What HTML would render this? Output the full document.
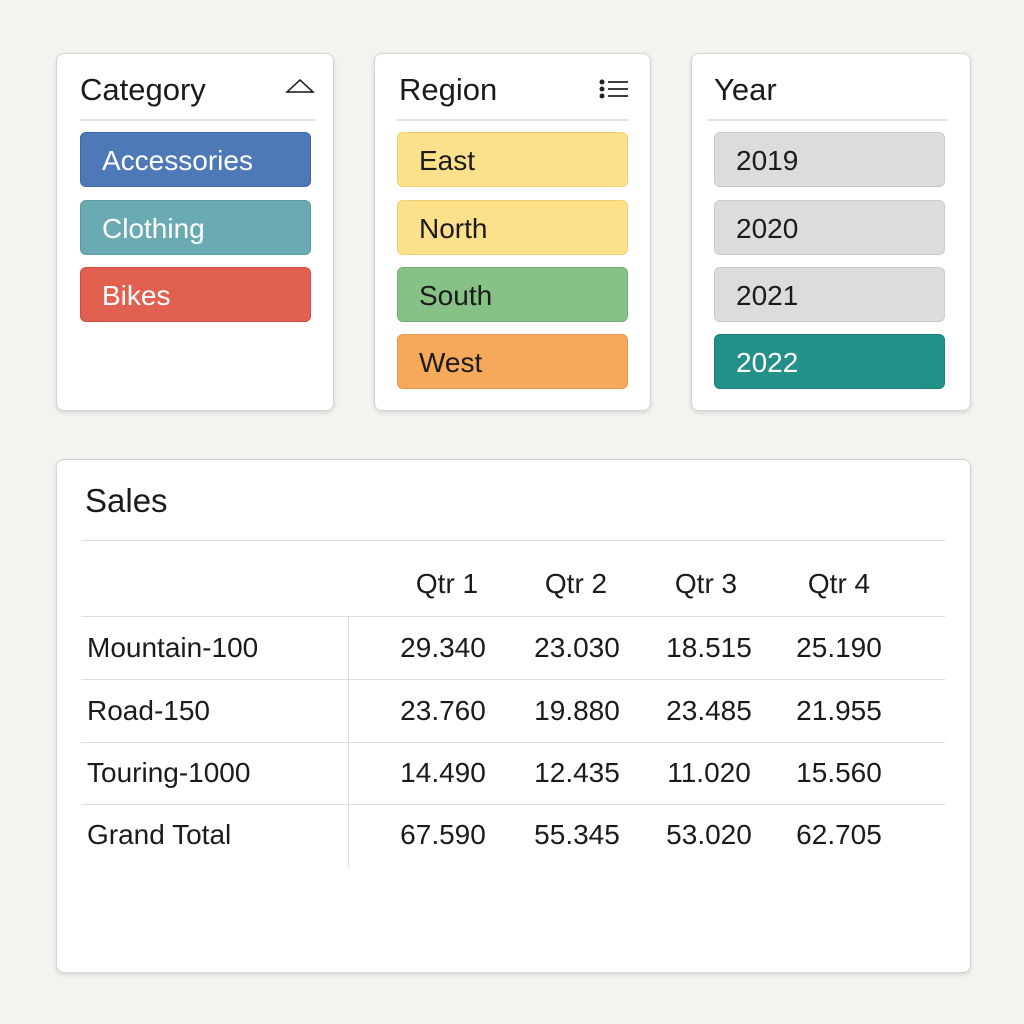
<!DOCTYPE html><html><head><style>
body{margin:0;width:1024px;height:1024px;background:#f4f3f0;font-family:"Liberation Sans",sans-serif;position:relative;overflow:hidden}
.card{position:absolute;background:#fff;border:1px solid #d4d4d2;border-radius:8px;box-shadow:0 2px 5px rgba(0,0,0,.12)}
.t{position:absolute;font-size:31px;color:#1b1b1b;top:18px}
.dv{position:absolute;height:2px;background:#e2e2e2}
.b{position:absolute;width:231px;height:55px;border-radius:6px;box-sizing:border-box;font-size:28px;line-height:55px;padding-left:21px;color:#1b1b1b}
.w{color:#fff}
.c{position:absolute;font-size:28px;color:#1b1b1b;transform:translateX(-50%);white-space:nowrap}
.l{position:absolute;font-size:28px;color:#1b1b1b}
.h{position:absolute;height:1px;background:#dcdcdc;left:24px;width:864px}
</style></head><body>
<div class="card" style="left:56px;top:53px;width:276px;height:356px">
<div class="t" style="left:23px">Category</div>
<svg style="position:absolute;left:228px;top:24px" width="30" height="16"><path d="M2 14 L15 2 L28 14 Z" fill="none" stroke="#111" stroke-width="1.5"/></svg>
<div class="dv" style="left:23px;top:65px;width:235px"></div>
<div class="b w" style="left:23px;top:78px;background:#4e79b7;border:1px solid #3d67a8">Accessories</div>
<div class="b w" style="left:23px;top:146px;background:#6aaab2;border:1px solid #5a9aa2">Clothing</div>
<div class="b w" style="left:23px;top:213px;background:#e2604f;border:1px solid #d24e40">Bikes</div>
</div>
<div class="card" style="left:374px;top:53px;width:275px;height:356px">
<div class="t" style="left:24px">Region</div>
<svg style="position:absolute;left:222px;top:24px" width="34" height="24"><g fill="#222"><circle cx="5" cy="4" r="2.5"/><circle cx="5" cy="11" r="2.5"/><circle cx="5" cy="18" r="2.5"/></g><g stroke="#222" stroke-width="1.7"><path d="M11 4H31M11 11H31M11 18H31"/></g></svg>
<div class="dv" style="left:22px;top:65px;width:232px"></div>
<div class="b" style="left:22px;top:78px;background:#fde08a;border:1px solid #f1cf6e">East</div>
<div class="b" style="left:22px;top:146px;background:#fde08a;border:1px solid #f1cf6e">North</div>
<div class="b" style="left:22px;top:213px;background:#86c285;border:1px solid #74b073">South</div>
<div class="b" style="left:22px;top:280px;background:#f6a95a;border:1px solid #e8964a">West</div>
</div>
<div class="card" style="left:691px;top:53px;width:278px;height:356px">
<div class="t" style="left:22px">Year</div>
<div class="dv" style="left:15px;top:65px;width:240px"></div>
<div class="b" style="left:22px;top:78px;background:#dcdcdc;border:1px solid #cacaca">2019</div>
<div class="b" style="left:22px;top:146px;background:#dcdcdc;border:1px solid #cacaca">2020</div>
<div class="b" style="left:22px;top:213px;background:#dcdcdc;border:1px solid #cacaca">2021</div>
<div class="b w" style="left:22px;top:280px;background:#23918a;border:1px solid #1a7f78">2022</div>
</div>
<div class="card" style="left:56px;top:459px;width:913px;height:512px">
<div class="l" style="left:28px;top:22px;font-size:33px">Sales</div>
<div class="h" style="top:80px"></div>
<div class="c" style="left:390px;top:108px">Qtr 1</div><div class="c" style="left:519px;top:108px">Qtr 2</div><div class="c" style="left:649px;top:108px">Qtr 3</div><div class="c" style="left:782px;top:108px">Qtr 4</div>
<div class="h" style="top:156px"></div>
<div class="h" style="top:219px"></div>
<div class="h" style="top:282px"></div>
<div class="h" style="top:344px"></div>
<div style="position:absolute;left:291px;top:156px;width:1px;height:251px;background:#dcdcdc"></div>
<div class="l" style="left:30px;top:172px">Mountain-100</div>
<div class="c" style="left:386px;top:172px">29.340</div><div class="c" style="left:520px;top:172px">23.030</div><div class="c" style="left:652px;top:172px">18.515</div><div class="c" style="left:782px;top:172px">25.190</div>
<div class="l" style="left:30px;top:235px">Road-150</div>
<div class="c" style="left:386px;top:235px">23.760</div><div class="c" style="left:520px;top:235px">19.880</div><div class="c" style="left:652px;top:235px">23.485</div><div class="c" style="left:782px;top:235px">21.955</div>
<div class="l" style="left:30px;top:297px">Touring-1000</div>
<div class="c" style="left:386px;top:297px">14.490</div><div class="c" style="left:520px;top:297px">12.435</div><div class="c" style="left:652px;top:297px">11.020</div><div class="c" style="left:782px;top:297px">15.560</div>
<div class="l" style="left:30px;top:359px">Grand Total</div>
<div class="c" style="left:386px;top:359px">67.590</div><div class="c" style="left:520px;top:359px">55.345</div><div class="c" style="left:652px;top:359px">53.020</div><div class="c" style="left:782px;top:359px">62.705</div>
</div>
</body></html>
